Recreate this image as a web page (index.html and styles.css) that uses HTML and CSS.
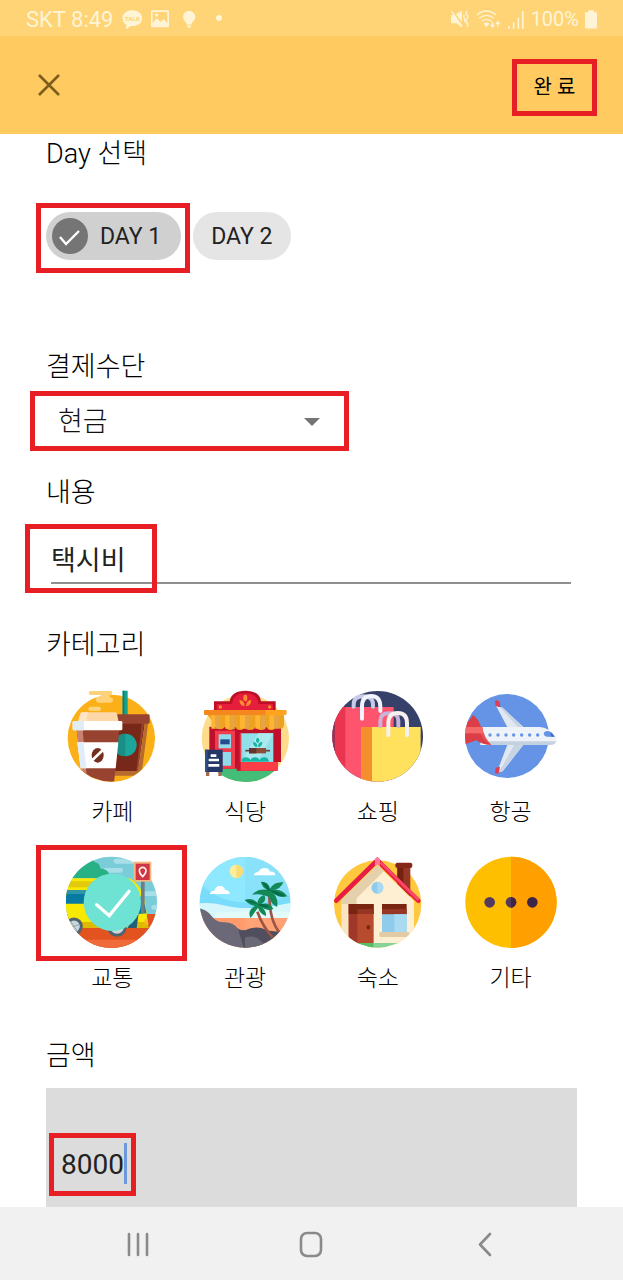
FILE: index.html
```html
<!DOCTYPE html>
<html lang="ko">
<head>
<meta charset="utf-8">
<meta name="viewport" content="width=device-width, initial-scale=1">
<title>지출 입력</title>
<link rel="stylesheet" href="styles.css">
</head>
<body>
<div class="status">
  <div class="status-group">
    <span class="carrier">SKT 8:49</span>
    <svg class="st-talk" viewBox="366 22 66 64" aria-hidden="true"><path d="M400 26c-17 0-30 10-30 24 0 9 5 16 12 20l-1 14 14-10h5c17 0 30-10 30-24s-13-24-30-24z" fill="#fff4d6"/><text x="400" y="59" text-anchor="middle" class="talk-text">TALK</text></svg>
    <svg class="st-photo" viewBox="459 30 54 52" aria-hidden="true"><path fill="#fff4d6" fill-rule="evenodd" d="M463 30h46q4 0 4 4v43q0 4-4 4h-46q-4 0-4-4V34q0-4 4-4zm1 5v33l13-15 11 12 8-9 12 12V35zm12 4a5 5 0 1 1 0 10 5 5 0 0 1 0-10z"/></svg>
    <svg class="st-bulb" viewBox="536 26 72 58" aria-hidden="true"><path fill="#fff4d6" d="M572 29c-11 0-18 8-18 18 0 8 5 13 9 17l2 6h14l2-6c5-4 10-9 10-17 0-10-8-18-19-18zM565 73h14q0 7-7 7t-7-7z"/></svg>
    <svg class="st-dot" viewBox="0 0 16 20" aria-hidden="true"><circle cx="10" cy="9" r="3" fill="#fff4d6"/></svg>
  </div>
  <div class="status-group status-right">
    <svg class="st-mute" viewBox="414 24 60 60" aria-hidden="true"><path fill="#fff4d6" d="M417 43h9l24 33v4L434 67h-17zM432 40l18-11v34z"/><g fill="none" stroke="#fff4d6" stroke-width="4"><path d="M419 31l31 45M465 29q-6 6 0 12t0 12 0 12 0 12"/><path d="M457 41q-4 5 0 11t0 12"/></g></svg>
    <svg class="st-wifi" viewBox="492 22 74 60" aria-hidden="true"><g fill="none" stroke="#fff4d6" stroke-width="4"><path d="M494 40q29-24 58 0M501 50q22-18 44 0M508 59q15-12 30 0"/><path stroke-width="4" d="M541 60v15m-6-6l6 7 6-7M557 76V61m-6 6l6-7 6 7"/></g><path fill="#fff4d6" d="M514 66q9-7 18 0l-9 10z"/></svg>
    <svg class="st-signal" viewBox="582 26 52 56" aria-hidden="true"><path stroke="#fff4d6" stroke-width="5" d="M587 73v8M601 63v18M615 49v32M628 30v51"/></svg>
    <span class="battery-text">100%</span>
    <svg class="st-battery" viewBox="819 26 36 56" aria-hidden="true"><path fill="#fff4d6" d="M829 26h17v6h6q3 0 3 3v43q0 3-3 3h-30q-3 0-3-3V35q0-3 3-3h7z"/></svg>
  </div>
</div>

<header class="appbar">
  <button class="close" type="button" aria-label="닫기"><svg viewBox="0 0 24 24" aria-hidden="true"><path d="M2 2l20 20M22 2L2 22" fill="none" stroke="#7c5d1b" stroke-width="2.600"/></svg></button>
  <button class="done marked" type="button">완 료</button>
</header>

<main class="form">
  <h2 class="title">Day 선택</h2>
  <div class="chips">
    <button class="chip chip-on marked" type="button" aria-pressed="true"><svg viewBox="0 0 36 36" aria-hidden="true"><circle cx="18" cy="18" r="18" fill="#757575"/><path d="M8 19l6 7 13-13" fill="none" stroke="#fff" stroke-width="2.400"/></svg>DAY 1</button>
    <button class="chip" type="button" aria-pressed="false">DAY 2</button>
  </div>

  <label class="title title-pay" for="pay">결제수단</label>
  <div class="pay marked">
    <select id="pay"><option>현금</option></select>
    <svg viewBox="0 0 16 8" aria-hidden="true"><path d="M0 0h16L8 8z" fill="#757575"/></svg>
  </div>

  <label class="title title-memo" for="memo">내용</label>
  <div class="memo"><input id="memo" type="text" value="택시비"><span class="memo-mark"></span></div>

  <h2 class="title title-category">카테고리</h2>
  <div class="categories" role="radiogroup" aria-label="카테고리">
    <label class="category"><input type="radio" name="category">
      <svg viewBox="34 30 276 276" aria-hidden="true">
        <clipPath id="c1"><path d="M20 0h300v174h-19a131 131 0 0 1-262 0H20z"/></clipPath>
        <circle cx="170" cy="175" r="131" fill="#fcb017"/>
        <g clip-path="url(#c1)">
          <rect x="102" y="33" width="71" height="12" rx="6" fill="#fdd27a"/><path d="M123 57q0-6 8-6h7V43h27v9q10 1 10 8 0 8-9 8h-34q-9-2-9-11z" fill="#fdd27a"/><rect x="101" y="80" width="38" height="13" rx="6" fill="#fdd27a"/>
          <path d="M204 32h15v75h-15z" fill="#13a38c"/><path d="M204 32h5v75h-5z" fill="#087e74"/>
          <path d="M184 127h87l-22 146h-75z" fill="#772819"/><path d="M271 127h10l-21 160h-82v-14h72z" fill="#b86b2f"/><path d="M262 127h6l-18 146h-5z" fill="#98432f"/>
          <rect x="176" y="103" width="109" height="28" rx="4" fill="#98432f"/>
          <circle cx="212" cy="195" r="34" fill="#1ca59a"/><path d="M188 171a34 34 0 0 1 24-10v68q-18 0-28-12z" fill="#188e87"/>
          <path d="M77 101q2-4 7-4h97q5 0 6 4l5 25H70z" fill="#fed7a8"/><path d="M77 101q2-4 7-4h15l-4 29H70z" fill="#ffe5c5"/>
          <path d="M66 150h128l-16 160H88z" fill="#98432f"/><path d="M66 150h18l14 160H84z" fill="#c98270"/>
          <rect x="54" y="123" width="149" height="28" rx="4" fill="#fff"/><path d="M58 123h30v28H58q-4 0-4-4v-20q0-4 4-4z" fill="#e0edf7"/>
          <path d="M68 187h123l-8 78H78z" fill="#fff"/><path d="M68 187h19l8 78H78z" fill="#dfeefa"/>
          <ellipse cx="129" cy="226" rx="18" ry="22" fill="#74301f"/><path d="M108 245l39-37" stroke="#fff" stroke-width="8"/>
        </g>
      </svg><span>카페</span></label>

    <label class="category"><input type="radio" name="category">
      <svg viewBox="27 30 276 276" aria-hidden="true">
        <clipPath id="c2"><circle cx="166" cy="175" r="131"/></clipPath>
        <circle cx="166" cy="175" r="131" fill="#ffdc8b"/><path clip-path="url(#c2)" d="M30 265h280v50H30z" fill="#44bd78"/>
        <path d="M72 64h47q5-32 47-32t47 32h44v33H72z" fill="#bd1028"/><path d="M80 72h46q4-32 40-32t40 32h43v22H80z" fill="#e51e3c"/>
        <g fill="#ff8d2f"><ellipse cx="166" cy="54" rx="6" ry="10"/><path d="M148 60q15 0 16 18-15 0-16-18zM184 60q-15 0-16 18 15 0 16-18z"/><circle cx="91" cy="81" r="5"/><circle cx="239" cy="81" r="5"/></g>
        <path d="M58 140h215v106h-10v26H140v-6H58z" fill="#be102b"/><path d="M75 152h60v114H75z" fill="#f23b4d"/>
        <path d="M86 163h37v42H86zM97 216h26v41H97z" fill="#91dae7"/><path d="M91 178h28v15H91z" fill="#234d91"/>
        <path d="M151 160h99v86h-99z" fill="#91dfe9"/><path d="M205 160h45l-48 86h-48z" fill="#ade8ef"/><path d="M149 160h5v86h-5z" fill="#e63b4c"/>
        <g fill="#17b6a2"><ellipse cx="203" cy="181" rx="5" ry="8"/><path d="M189 186q13 0 13 15-13 0-13-15zM217 186q-13 0-13 15 13 0 13-15z"/><path d="M155 245q0-13 12-13t14 9q3-9 14-9t14 9q3-9 14-9t14 13z"/></g>
        <path d="M166 212h74" stroke="#6c3c36" stroke-width="5"/><path d="M177 204h51v16h-51z" fill="#8d4c37"/><path d="M177 204h22v16h-22z" fill="#62352e"/>
        <path d="M141 246h122v26H141z" fill="#fb3d48"/><path d="M141 246h11v26h-11z" fill="#bd1730"/>
        <path d="M48 100h234v34q0 12-12 12-10 0-12-8-3 12-15 12t-14-12q-3 12-16 12t-16-12q-3 12-16 12t-16-12q-3 12-15 12t-15-12q-3 12-15 12t-15-12q-3 10-15 10-12 0-12-12z" fill="#efa21f"/>
        <path d="M64 106h12v40H64zM106 106h13v40h-13zM150 106h16v40h-16zM196 106h14v40h-14zM238 106h15v42h-15z" fill="#ffb531"/><path d="M76 106h14v40H76zM122 106h12v42h-12zM166 106h13v42h-13zM212 106h14v42h-14zM253 106h13v40h-13z" fill="#e5a446"/>
        <rect x="42" y="90" width="247" height="15" rx="3" fill="#f5871f"/><path d="M227 90h58q4 0 4 4v8q0 3-4 3h-58z" fill="#ffa41c"/>
        <path d="M48 272h10v16H48zM85 272h10v16H85z" fill="#a26a4c"/><path d="M45 209h53v67H45z" fill="#233867"/><path d="M45 209h8v67h-8z" fill="#315084"/><path d="M62 227h17M56 240h31M55 256h33" stroke="#fff" stroke-width="8"/>
      </svg><span>식당</span></label>

    <label class="category"><input type="radio" name="category">
      <svg viewBox="36 30 276 276" aria-hidden="true">
        <clipPath id="c3"><circle cx="173" cy="169" r="136"/></clipPath>
        <g clip-path="url(#c3)"><path d="M30 30h290v280H30z" fill="#36416a"/>
          <path d="M44 81h177v230H44z" fill="#ff546d"/><path d="M36 81h40v230H36" fill="#e9354f"/><path d="M36 81h9v230h-9z" fill="#9b3158"/>
          <path d="M125 141h177v170H125z" fill="#ffe15e"/><path d="M125 141h31v170h-31z" fill="#f58e2d"/></g>
        <g fill="none" stroke-linecap="round" stroke-width="12"><path d="M101 80V74q0-25 29-25t29 25v6" stroke="#c8cbe8"/><path d="M126 116V79q0-31 27-31t28 31v14" stroke="#f2f3fd"/><path d="M181 138v-16q0-22 27-22t27 22v16" stroke="#c8b4d9"/><path d="M205 166v-36q0-31 28-31t28 31v36" stroke="#f7f1ee"/></g>
      </svg><span>쇼핑</span></label>

    <label class="category"><input type="radio" name="category">
      <svg viewBox="44 30 276 276" aria-hidden="true">
        <clipPath id="c4"><circle cx="170" cy="168" r="126"/></clipPath><circle cx="170" cy="168" r="126" fill="#6593e5"/>
        <path d="M137 77l20 6 66 62-51-2zM172 192h49l-64 82-18 4z" fill="#e0e8f1"/><path d="M157 83l66 62-18-2-57-62zM193 192h28l-64 82-10 2z" fill="#c7d4e3"/>
        <path d="M134 62q12-3 14 4l2 16-14-4zM136 263l13-3-3 17q-3 7-12 3z" fill="#dd3e50"/>
        <path d="M90 141h178q28 2 45 25 8 8 4 18-2 11-18 11H90z" fill="#edf3f9"/><path d="M100 184h218q-2 11-20 11H110z" fill="#c4d2df"/>
        <g clip-path="url(#c4)"><path d="M44 141h52q4 31 27 53-26 2-45-18l-34 15z" fill="#e65358"/><path d="M68 105q17 12 24 36H44v-8q14-10 24-28zM44 160h46q8 22 33 34-28 0-45-13l-34 12z" fill="#dc3e47"/><path d="M44 141h52l3 19H44z" fill="#f46969"/></g>
        <g fill="#6593e5"><circle cx="119" cy="165" r="5"/><circle cx="143" cy="165" r="5"/><circle cx="167" cy="165" r="5"/><circle cx="190" cy="165" r="5"/><circle cx="214" cy="165" r="5"/><circle cx="238" cy="165" r="5"/><circle cx="262" cy="165" r="5"/><path d="M289 153q15 0 24 17h-24q-9-3-9-9t9-8z"/></g><path d="M300 156q9 6 13 14h-10z" fill="#3b6fc9"/>
      </svg><span>항공</span></label>

    <label class="category marked"><input type="radio" name="category" checked>
      <svg viewBox="109 48 276 276" aria-hidden="true">
        <clipPath id="c5"><circle cx="245" cy="187" r="137"/></clipPath>
        <g clip-path="url(#c5)"><path d="M100 48h290v280H100z" fill="#7accd9"/><g fill="#a7dfe8"><rect x="252" y="56" width="70" height="15" rx="7"/><rect x="220" y="84" width="60" height="14" rx="7"/><rect x="341" y="154" width="50" height="14" rx="7"/><rect x="365" y="195" width="30" height="14" rx="7"/></g>
          <path d="M100 114h135l2-16q-8-12-24-12-4-18-18-20-12-13-33-3L100 104z" fill="#27b184"/>
          <path d="M104 222h290v110H104z" fill="#e35320"/><path d="M104 299h290v30H104z" fill="#f06b39"/>
          <path d="M104 115h196q38 20 48 80l8 69H104z" fill="#f8e900"/><path d="M104 124h120v18H104z" fill="#e1c90e"/><path d="M104 151h210q32 22 36 69l-25 2-25 24H190l-12-55h-74z" fill="#067aa0"/><path d="M104 151h90v11h-90z" fill="#2e96aa"/><path d="M104 246h252v18H104z" fill="#ddb900"/><path d="M295 264q4-30 20-44h12l-6 44z" fill="#245e7d"/><path d="M345 238h10v16h-10z" fill="#ffb531"/>
          <g fill="#c8d8df" stroke="#53636e" stroke-width="9"><circle cx="133" cy="259" r="22"/><circle cx="262" cy="261" r="25"/></g><path d="M123 244l20 30M116 264l32-10" stroke="#8fa7b3" stroke-width="3"/>
          <path d="M334 124h11v95h-11z" fill="#727c83"/></g>
        <path d="M312 65h53v60h-53z" fill="#f3b980"/><path d="M318 71h42v49h-42z" fill="#ce3545"/><path d="M339 82a10 10 0 0 0-10 10q0 8 10 18 10-10 10-18a10 10 0 0 0-10-10z" fill="none" stroke="#fff0e6" stroke-width="5"/>
        <circle cx="248" cy="187" r="86" fill="#6ee2d3"/><path d="M201 194l38 33 59-73" fill="none" stroke="#fff" stroke-width="10" stroke-linecap="round"/>
      </svg><span>교통</span></label>

    <label class="category"><input type="radio" name="category">
      <svg viewBox="27 33 276 276" aria-hidden="true">
        <clipPath id="c6"><circle cx="165" cy="172" r="136"/></clipPath><g clip-path="url(#c6)">
          <path d="M20 30h290v200H20z" fill="#79dcfb"/><path d="M20 30h145v142Q90 170 43 125H20z" fill="#8ee8ff"/><path d="M165 30h145v115q-60 36-145 27z" fill="#8ae2fa"/>
          <path d="M20 176q40-6 77 4 75 22 213-8v52H20z" fill="#d5f7fb"/><path d="M72 204q100-8 235-4v20H80z" fill="#e3fafa"/><path d="M20 219h290v93H20z" fill="#ff9b6d"/><path d="M165 219h145v93H165z" fill="#ffa276"/>
          <circle cx="139" cy="79" r="20" fill="#ffed97"/><path d="M139 59a20 20 0 0 1 0 40z" fill="#f7dc74"/>
          <path d="M191 91q0-8 13-10 8-13 21-12 12 0 15 11 15-2 16 11zM60 147q0-9 13-10 5-15 18-15 13 2 14 13 14 1 14 12z" fill="#fff"/>
          <path d="M20 189q28 2 44 23t40 20q28 2 38 17 12 9 23 7v60H20z" fill="#6b6978"/><path d="M145 256h20q35-16 62-2 24 7 73 6v60H165z" fill="#514e5d"/><path d="M165 278q26-10 44 7l28 23h-72z" fill="#6b6978"/>
          <path d="M238 153q1 73 30 109M202 200q18 48 46 77" fill="none" stroke="#9c5547" stroke-width="8"/>
          <g fill="#138957"><path d="M239 157q-27-14-53-7 15-20 47-16-18-7-20-24 23-1 27 21 13-22 40-19-8 22-34 24 29-7 46 18-25 8-46-12 21 17 15 44-20-10-22-29z"/><path d="M204 188q-8 11-22 31-12-22 13-36-16-2-31-18 22-8 38 8 4-18 21-24 8 19-10 29 26-8 37 14-20 8-34-5 14 12 12 26-18-6-24-25z"/></g><path d="M186 150q24-14 47-14l-18-25q18 4 26 26-24-2-55 13zM239 136q28 2 46 17-22 4-46-17zM164 166q22-3 38 11-18-1-38-11zM203 178q22-4 36 8-18 5-36-8z" fill="#066b4b"/>
        </g>
      </svg><span>관광</span></label>

    <label class="category"><input type="radio" name="category">
      <svg viewBox="36 33 276 276" aria-hidden="true">
        <clipPath id="c7"><circle cx="173" cy="177" r="131"/></clipPath><circle cx="173" cy="177" r="131" fill="#ffc83d"/>
        <path d="M232 65h39v90l-39-38z" fill="#983625"/><path d="M232 65h18v65l-18-18z" fill="#74220f"/><rect x="226" y="53" width="51" height="16" rx="6" fill="#852818"/>
        <g clip-path="url(#c7)"><path d="M172 60l110 108v142H65V164z" fill="#ffefd2"/><path d="M172 60l20 18-82 82v17H65v-13z" fill="#e5d0ac"/><path d="M65 177h18v130H65z" fill="#f7e5c4"/><path d="M86 177h75v120H86z" fill="#b84b2d"/><path d="M86 177h26v120H86z" fill="#9f3828"/><path d="M86 177h75v30H86z" fill="#792510"/><path d="M112 192h49v15h-49z" fill="#963520"/><ellipse cx="145" cy="247" rx="5" ry="7" fill="#792510"/>
          <path d="M186 177h74v32h-74z" fill="#792510"/><path d="M186 192h74v16h-74z" fill="#983625"/><path d="M186 208h74v54h-74z" fill="#8fccec"/><path d="M223 208h37v54h-37z" fill="#a9daf2"/><rect x="178" y="261" width="90" height="15" rx="4" fill="#e2cba4"/><path d="M60 294h220v20H60z" fill="#85d396"/><path d="M60 294h100v20H60z" fill="#57bd67"/></g>
        <circle cx="172" cy="128" r="18" fill="#8fccec"/><path d="M172 110a18 18 0 0 1 0 36z" fill="#a9daf2"/>
        <path d="M49 167L172 46l123 121" fill="none" stroke="#e91d43" stroke-width="14" stroke-linecap="round"/><path d="M182 53l114 112" stroke="#f94a67" stroke-width="8"/><path d="M165 42q7-11 15 0v22l-8-7-7 7z" fill="#ff789a"/>
      </svg><span>숙소</span></label>

    <label class="category"><input type="radio" name="category">
      <svg viewBox="434 33 276 276" aria-hidden="true"><circle cx="572" cy="172" r="137" fill="#fdbf00"/><path d="M572 35a137 137 0 0 1 0 274z" fill="#ff9f00"/><g fill="#553a60"><circle cx="508" cy="172" r="16"/><circle cx="572" cy="172" r="16"/></g><path d="M572 156a16 16 0 0 1 0 32zM636 156a16 16 0 0 1 0 32 16 16 0 0 1 0-32z" fill="#3d2547"/></svg><span>기타</span></label>
  </div>

  <label class="title title-amount" for="amount">금액</label>
  <div class="amount-box">
    <div class="amount marked"><input id="amount" type="text" inputmode="numeric" value="8000"><span class="caret"></span></div>
  </div>
</main>

<nav class="navbar" aria-label="시스템">
  <button type="button" aria-label="최근 앱"><svg viewBox="0 0 28 28" aria-hidden="true"><path d="M5 4v21M14 4v21M23 4v21" fill="none" stroke="#8a8a8a" stroke-width="2.600" stroke-linecap="round"/></svg></button>
  <button type="button" aria-label="홈"><svg viewBox="0 0 28 28" aria-hidden="true"><rect x="4" y="3" width="20" height="23" rx="6" fill="none" stroke="#8a8a8a" stroke-width="2.600"/></svg></button>
  <button type="button" aria-label="뒤로"><svg viewBox="0 0 28 28" aria-hidden="true"><path d="M19 4L9 14.500 19 25" fill="none" stroke="#8a8a8a" stroke-width="2.600" stroke-linecap="round" stroke-linejoin="round"/></svg></button>
</nav>
</body>
</html>
```

FILE: styles.css
```css
* { box-sizing: border-box; }

body {
  margin: 0;
  min-height: 100vh;
  display: flex;
  flex-direction: column;
  background: #fff;
  color: #111;
  font-family: Roboto, "Noto Sans CJK KR", sans-serif;
  font-weight: 300;
}

button, input, select { font: inherit; color: inherit; border: 0; margin: 0; padding: 0; background: none; }
input:focus, select:focus { outline: none; }
svg { display: block; flex: none; }

/* Red highlight drawn over a control */
.marked { position: relative; }
.marked::after, .memo-mark {
  content: "";
  position: absolute;
  border: 5px solid #e81e25;
  pointer-events: none;
}

.status {
  height: 36px;
  padding: 2px 26px 0;
  display: flex;
  justify-content: space-between;
  align-items: center;
  background: #fed477;
  color: #fff4d6;
}
.status-group { display: flex; align-items: center; gap: 8px; }
.carrier { font-size: 22px; font-weight: 400; }
.battery-text { font-size: 20px; font-weight: 400; }
.status-right { gap: 6px; }
.talk-text { font: bold 19px Roboto, sans-serif; fill: #fed477; }
.st-talk { width: 22px; height: 21px; }
.st-photo { width: 18px; height: 18px; }
.st-bulb { width: 24px; height: 19px; }
.st-dot { width: 16px; height: 20px; }
.st-mute { width: 20px; height: 20px; }
.st-wifi { width: 25px; height: 20px; }
.st-signal { width: 18px; height: 19px; }
.st-battery { width: 12px; height: 19px; }

.appbar {
  height: 98px;
  padding: 0 26px;
  display: flex;
  justify-content: space-between;
  align-items: center;
  background: #ffcb61;
}
.close { width: 45px; height: 45px; display: grid; place-items: center; }
.close svg { width: 24px; height: 24px; }
.done { width: 85px; height: 57px; font-size: 20px; font-weight: 400; color: #000; }
.done::after { inset: 2px 0 -2px; }

.form { flex: 1; padding: 4px 46px 0; display: flex; flex-direction: column; }
.title { display: block; margin: 0; font-size: 27px; line-height: 32px; font-weight: 300; color: #000; }

.chips { display: flex; gap: 12px; margin-top: 42px; }
.chip {
  height: 48px;
  padding: 0 18px;
  display: flex;
  align-items: center;
  gap: 12px;
  border-radius: 24px;
  background: #e5e5e5;
  color: #222;
  font-size: 23px;
  font-weight: 400;
}
.chip svg { width: 36px; height: 36px; }
.chip-on { background: #d0d0d0; padding: 0 20px 0 6px; }
.chip-on::after { inset: -9px -9px -13px -10px; }

.title-pay { margin-top: 91px; }
.pay { width: 55%; height: 50px; margin-top: 14px; display: flex; align-items: center; }
.pay select { appearance: none; width: 100%; height: 50px; padding-left: 12px; font-size: 27px; }
.pay svg { width: 16px; height: 8px; margin-left: -34px; pointer-events: none; }
.pay::after { inset: -6px -11px -4px -16px; }

.title-memo { margin-top: 30px; }
.memo { position: relative; margin: 25px 6px 0 5px; border-bottom: 2px solid #8f8f8f; }
.memo input { display: block; width: 100%; height: 48px; font-size: 27px; font-weight: 400; color: #222; }
.memo-mark { left: -26px; top: -10px; bottom: -11px; width: 132px; }

.title-category { margin-top: 45px; }
.categories { margin-top: 29px; display: grid; grid-template-columns: repeat(4, 1fr); row-gap: 27px; }
.category { display: flex; flex-direction: column; align-items: center; gap: 15px; font-size: 23px; line-height: 32px; color: #000; }
.category svg { width: 92px; height: 92px; }
.category input { appearance: none; position: absolute; }
.category.marked::after { inset: -11px -8px 34px -10px; }

.title-amount { margin-top: 45px; }
.amount-box { flex: 1; margin-top: 16px; padding: 55px 15px 22px; background: #dcdcdc; }
.amount { display: inline-flex; align-items: center; vertical-align: top; }
.amount input { width: 4ch; height: 41px; padding-top: 2px; font-size: 28px; font-weight: 400; color: #222; }
.caret { width: 3px; height: 41px; background: #6c98dc; }
.amount::after { inset: -10px -9px -12px -12px; }

.navbar { height: 73px; padding: 0 51px; display: grid; grid-template-columns: repeat(3, 1fr); background: #f1f1f1; }
.navbar button { display: grid; place-items: center; }
.navbar svg { width: 28px; height: 28px; }
```
